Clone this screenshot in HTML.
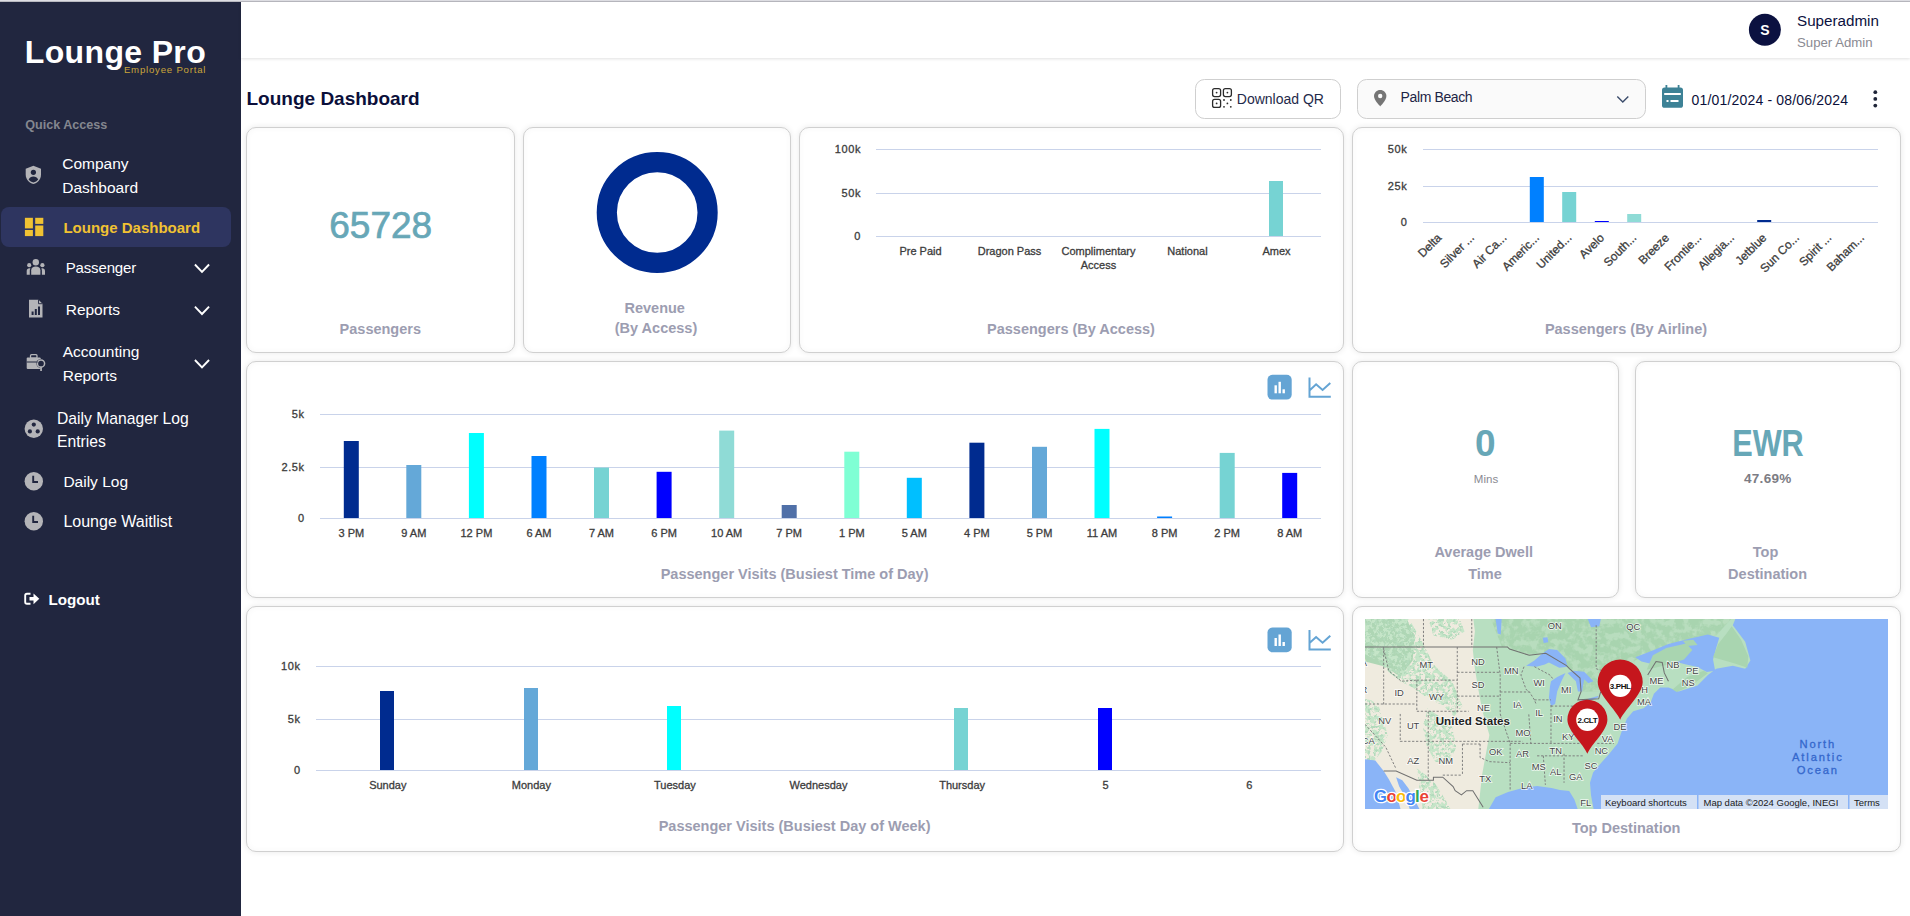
<!DOCTYPE html>
<html><head><meta charset="utf-8">
<style>
*{box-sizing:border-box;margin:0;padding:0}
html,body{width:1910px;height:916px;overflow:hidden;background:#fff;font-family:"Liberation Sans",sans-serif;position:relative}
.a{position:absolute}
.t{position:absolute;line-height:1;white-space:nowrap}
.c{text-align:center}
#topline{left:0;top:0;width:1910px;height:2px;background:linear-gradient(#dedee3 0 1px,#b9b9c0 1px 2px)}
#side{left:0;top:2px;width:241px;height:914px;background:#21263f}
#hdr{left:241px;top:2px;width:1669px;height:56px;background:#fff;box-shadow:0 1px 3px rgba(0,0,0,.12)}
.card{position:absolute;border:1px solid #d0d0d0;border-radius:10px;background:#fff;box-shadow:0 0 6px rgba(0,0,0,.09), inset 0 0 6px rgba(0,0,0,.035)}
.nav{color:#fff;font-size:16px}
.ttl{color:#9c9db1;font-weight:700;font-size:14.5px}
</style></head><body>
<div id="topline" class="a"></div>
<div id="side" class="a"></div>
<div id="hdr" class="a"></div>
<!-- SIDEBAR -->
<svg class="a" style="left:0;top:0" width="241" height="916" viewBox="0 0 241 916" font-family="Liberation Sans">
<text x="24.8" y="62.8" font-size="32" font-weight="700" fill="#fff" letter-spacing="0.35">Lounge Pro</text>
<text x="123.9" y="73.4" font-size="9.6" fill="#c9a43a" letter-spacing="0.8">Employee Portal</text>
<text x="25.2" y="129.1" font-size="12.6" font-weight="700" fill="#84868f">Quick Access</text>
<!-- company -->
<path d="M33.4 165.8 L41 168.8 V174.5 C41 179 38 182.8 33.4 184.1 C28.8 182.8 25.7 179 25.7 174.5 V168.8 Z" fill="#b4b4b8"/>
<circle cx="33.4" cy="172.3" r="2.6" fill="#21263f"/>
<path d="M28.6 179.6 C29.5 177.3 31.3 176.4 33.4 176.4 C35.5 176.4 37.3 177.3 38.2 179.6 C37 181.2 35.3 182.2 33.4 182.6 C31.5 182.2 29.8 181.2 28.6 179.6 Z" fill="#21263f"/>
<text x="62.2" y="168.9" font-size="15.5" fill="#fff">Company</text>
<text x="62.2" y="193" font-size="15.5" fill="#fff">Dashboard</text>
<!-- active -->
<rect x="1" y="207" width="230" height="40" rx="8" fill="#2e3560"/>
<g fill="#f0c233"><rect x="24.9" y="217.8" width="8" height="10.6"/><rect x="24.9" y="230" width="8" height="6.1"/><rect x="35.2" y="217.8" width="8.1" height="6.1"/><rect x="35.2" y="225.5" width="8.1" height="10.6"/></g>
<text x="63.4" y="232.7" font-size="15" font-weight="700" fill="#f1c232">Lounge Dashboard</text>
<!-- passenger -->
<g fill="#b4b4b8">
<circle cx="35.8" cy="262.2" r="3.2"/><circle cx="29.2" cy="265.2" r="2.1"/><circle cx="42.4" cy="265.2" r="2.1"/>
<path d="M31.2 274.8 V270.2 C31.2 267.6 33.2 266.4 35.8 266.4 C38.4 266.4 40.4 267.6 40.4 270.2 V274.8 Z"/>
<path d="M26.7 274.8 V271 C26.7 269.2 27.8 268.2 29.6 268.2 L30.4 268.4 C30 269 29.8 269.8 29.8 270.6 V274.8 Z"/>
<path d="M45 274.8 V271 C45 269.2 43.9 268.2 42.1 268.2 L41.3 268.4 C41.7 269 41.9 269.8 41.9 270.6 V274.8 Z"/>
</g>
<text x="65.7" y="273.2" font-size="15" fill="#fff" letter-spacing="-0.15">Passenger</text>
<!-- reports -->
<path d="M29 299.7 H38.5 L42.5 303.7 V317.6 H29 Z" fill="#b4b4b8"/>
<path d="M38.5 299.7 V303.7 H42.5" fill="none" stroke="#21263f" stroke-width="0.9"/>
<g fill="#21263f"><rect x="31.6" y="311.5" width="2" height="3.5"/><rect x="34.8" y="309" width="2" height="6"/><rect x="38" y="306.5" width="2" height="8.5"/></g>
<text x="65.7" y="315.3" font-size="15.5" fill="#fff">Reports</text>
<!-- accounting -->
<g fill="#b4b4b8">
<rect x="26.7" y="357.5" width="14" height="11.5" rx="1"/>
<rect x="30.5" y="354.7" width="6.5" height="3.5" rx="1" fill="none" stroke="#b4b4b8" stroke-width="1.3"/>
<circle cx="41" cy="363.5" r="4.6" fill="#21263f"/><circle cx="41" cy="363.5" r="3.6" fill="none" stroke="#b4b4b8" stroke-width="1.5"/>
<rect x="40.2" y="367" width="1.7" height="4"/>
</g>
<rect x="26.7" y="361.5" width="11" height="1" fill="#21263f"/>
<text x="62.7" y="357" font-size="15.5" fill="#fff">Accounting</text>
<text x="62.7" y="381.2" font-size="15.5" fill="#fff">Reports</text>
<!-- chevrons -->
<g fill="none" stroke="#fff" stroke-width="1.9" stroke-linecap="square">
<path d="M195.6 265.2 L202 271.9 L208.4 265.2"/>
<path d="M195.6 307.3 L202 314 L208.4 307.3"/>
<path d="M195.6 360.7 L202 367.4 L208.4 360.7"/>
</g>
<!-- daily manager -->
<circle cx="33.8" cy="428.8" r="9.2" fill="#b4b4b8"/>
<g fill="#21263f"><circle cx="33.8" cy="424.6" r="2.1"/><circle cx="29.9" cy="431.4" r="2.1"/><circle cx="37.7" cy="431.4" r="2.1"/></g>
<text x="57" y="423.7" font-size="15.7" fill="#fff">Daily Manager Log</text>
<text x="57" y="447" font-size="15.7" fill="#fff">Entries</text>
<!-- clocks -->
<circle cx="33.8" cy="481.2" r="9.2" fill="#b4b4b8"/>
<path d="M33.2 475.8 V482 H38" fill="none" stroke="#21263f" stroke-width="1.9"/>
<text x="63.4" y="487.1" font-size="15.5" fill="#fff">Daily Log</text>
<circle cx="33.8" cy="521.2" r="9.2" fill="#b4b4b8"/>
<path d="M33.2 515.8 V522 H38" fill="none" stroke="#21263f" stroke-width="1.9"/>
<text x="63.4" y="527.2" font-size="16" fill="#fff">Lounge Waitlist</text>
<!-- logout -->
<g transform="translate(0,-0.8)"><path d="M30.5 594.5 H27 C25.8 594.5 25.2 595.2 25.2 596.3 V602.8 C25.2 603.9 25.8 604.6 27 604.6 H30.5" fill="none" stroke="#fff" stroke-width="1.9"/>
<path d="M29.5 597.8 H33.5 V594.2 L39.3 599.6 L33.5 605 V601.4 H29.5 Z" fill="#fff"/></g>
<text x="48.4" y="604.6" font-size="15.2" font-weight="700" fill="#fff">Logout</text>
</svg>
<!-- HEADER -->
<svg class="a" style="left:241px;top:0" width="1669" height="125" viewBox="241 0 1669 125" font-family="Liberation Sans">
<circle cx="1764.9" cy="29.7" r="16" fill="#0b1140"/>
<text x="1764.9" y="35" font-size="14" font-weight="700" fill="#fff" text-anchor="middle">S</text>
<text x="1797" y="25.6" font-size="15.2" fill="#0b1140">Superadmin</text>
<text x="1797" y="46.7" font-size="13.2" fill="#8a8a92">Super Admin</text>
<text x="246.5" y="105.1" font-size="19" font-weight="700" fill="#0b0f3a">Lounge Dashboard</text>
<!-- download QR -->
<rect x="1195.5" y="79.5" width="145" height="39" rx="9" fill="#fff" stroke="#cfcfcf"/>
<g fill="none" stroke="#2b2b2b" stroke-width="1.3">
<rect x="1212.6" y="88.6" width="8" height="8" rx="2"/>
<rect x="1223.4" y="88.6" width="8" height="8" rx="2"/>
<rect x="1212.6" y="99.4" width="8" height="8" rx="2"/>
</g>
<g fill="#2b2b2b">
<circle cx="1216.6" cy="92.6" r="0.9"/><circle cx="1227.4" cy="92.6" r="0.9"/><circle cx="1216.6" cy="103.4" r="0.9"/>
<circle cx="1224" cy="100" r="0.9"/><circle cx="1230.8" cy="100" r="0.9"/><circle cx="1227.4" cy="103.4" r="0.9"/><circle cx="1224" cy="106.8" r="0.9"/><circle cx="1230.8" cy="106.8" r="0.9"/>
</g>
<text x="1236.8" y="104.3" font-size="14" fill="#1f2a4a">Download QR</text>
<!-- select -->
<rect x="1357.5" y="79.5" width="288" height="39" rx="9" fill="#fafafa" stroke="#cfcfcf"/>
<path d="M1380.2 90 C1376.8 90 1374 92.7 1374 96.1 C1374 100.5 1380.2 106.4 1380.2 106.4 C1380.2 106.4 1386.4 100.5 1386.4 96.1 C1386.4 92.7 1383.6 90 1380.2 90 Z" fill="#757575"/>
<circle cx="1380.2" cy="96" r="2.2" fill="#fafafa"/>
<text x="1400.6" y="102.2" font-size="14" fill="#1d2545" textLength="72" lengthAdjust="spacing">Palm Beach</text>
<path d="M1617.3 96.4 L1622.8 102 L1628.3 96.4" fill="none" stroke="#3b4c6b" stroke-width="1.4"/>
<!-- calendar -->
<rect x="1662" y="87.5" width="21" height="20.3" rx="2.6" fill="#3d8296"/>
<rect x="1664.2" y="93" width="16.6" height="2" fill="#fff"/>
<rect x="1665.5" y="85" width="1.8" height="4" fill="#3d8296"/><rect x="1677.7" y="85" width="1.8" height="4" fill="#3d8296"/>
<rect x="1666.5" y="100" width="2" height="2" fill="#fff"/><rect x="1670.5" y="100" width="8" height="2" fill="#fff"/>
<text x="1691.5" y="105.1" font-size="14" fill="#0b0f3a" letter-spacing="0.18">01/01/2024 - 08/06/2024</text>
<g fill="#1f2538"><circle cx="1875.3" cy="92.2" r="1.9"/><circle cx="1875.3" cy="98.9" r="1.9"/><circle cx="1875.3" cy="105.6" r="1.9"/></g>
</svg>
<!-- CARDS -->
<div class="card" style="left:246px;top:127px;width:269px;height:226px"></div>
<div class="card" style="left:523px;top:127px;width:268px;height:226px"></div>
<div class="card" style="left:799px;top:127px;width:545px;height:226px"></div>
<div class="card" style="left:1352px;top:127px;width:549px;height:226px"></div>
<div class="card" style="left:246px;top:361px;width:1098px;height:237px"></div>
<div class="card" style="left:1352px;top:361px;width:267px;height:237px"></div>
<div class="card" style="left:1635px;top:361px;width:266px;height:237px"></div>
<div class="card" style="left:246px;top:606px;width:1098px;height:246px"></div>
<div class="card" style="left:1352px;top:606px;width:549px;height:246px"></div>
<!--CARDS_BEGIN--><svg class="a" style="left:0;top:0" width="1910" height="916" viewBox="0 0 1910 916" font-family="Liberation Sans">
<text x="380.7" y="237.7" font-size="37" fill="#67a7b7" stroke="#67a7b7" stroke-width="0.7" text-anchor="middle">65728</text>
<text x="380.3" y="334.1" font-size="14.5" font-weight="700" fill="#9c9db1" text-anchor="middle">Passengers</text>
<circle cx="657.2" cy="212.5" r="50.4" fill="none" stroke="#002b8f" stroke-width="20.2"/>
<text x="654.7" y="313.4" font-size="14.5" font-weight="700" fill="#9c9db1" text-anchor="middle">Revenue</text>
<text x="656" y="333.2" font-size="14.5" font-weight="700" fill="#9c9db1" text-anchor="middle">(By Access)</text>
<rect x="876" y="149" width="445" height="1" fill="#c9d3ea"/>
<text x="861" y="153.3" font-size="11" fill="#3c3c3c" stroke="#3c3c3c" stroke-width="0.3" letter-spacing="0.6" text-anchor="end">100k</text>
<rect x="876" y="193" width="445" height="1" fill="#c9d3ea"/>
<text x="861" y="197.3" font-size="11" fill="#3c3c3c" stroke="#3c3c3c" stroke-width="0.3" letter-spacing="0.6" text-anchor="end">50k</text>
<rect x="876" y="236" width="445" height="1" fill="#c9d3ea"/>
<text x="861" y="240.3" font-size="11" fill="#3c3c3c" stroke="#3c3c3c" stroke-width="0.3" letter-spacing="0.6" text-anchor="end">0</text>
<text x="920.5" y="255.3" font-size="11" fill="#3c3c3c" stroke="#3c3c3c" stroke-width="0.3" text-anchor="middle">Pre Paid</text>
<text x="1009.5" y="255.3" font-size="11" fill="#3c3c3c" stroke="#3c3c3c" stroke-width="0.3" text-anchor="middle">Dragon Pass</text>
<text x="1098.5" y="255.3" font-size="11" fill="#3c3c3c" stroke="#3c3c3c" stroke-width="0.3" text-anchor="middle">Complimentary</text>
<text x="1187.5" y="255.3" font-size="11" fill="#3c3c3c" stroke="#3c3c3c" stroke-width="0.3" text-anchor="middle">National</text>
<text x="1276.5" y="255.3" font-size="11" fill="#3c3c3c" stroke="#3c3c3c" stroke-width="0.3" text-anchor="middle">Amex</text>
<text x="1098.5" y="269" font-size="11" fill="#3c3c3c" stroke="#3c3c3c" stroke-width="0.3" text-anchor="middle">Access</text>
<rect x="1269" y="181" width="14" height="55" fill="#76d3d3"/>
<text x="1071" y="334.1" font-size="14.5" font-weight="700" fill="#9c9db1" text-anchor="middle">Passengers (By Access)</text>
<rect x="1423" y="149" width="455" height="1" fill="#c9d3ea"/>
<text x="1407.4" y="153.3" font-size="11" fill="#3c3c3c" stroke="#3c3c3c" stroke-width="0.3" letter-spacing="0.6" text-anchor="end">50k</text>
<rect x="1423" y="186" width="455" height="1" fill="#c9d3ea"/>
<text x="1407.4" y="190.3" font-size="11" fill="#3c3c3c" stroke="#3c3c3c" stroke-width="0.3" letter-spacing="0.6" text-anchor="end">25k</text>
<rect x="1423" y="222" width="455" height="1" fill="#c9d3ea"/>
<text x="1407.4" y="226.3" font-size="11" fill="#3c3c3c" stroke="#3c3c3c" stroke-width="0.3" letter-spacing="0.6" text-anchor="end">0</text>
<text transform="translate(1442.2,238.5) rotate(-45)" font-size="11.8" fill="#3c3c3c" stroke="#3c3c3c" stroke-width="0.3" text-anchor="end">Delta</text>
<text transform="translate(1474.8,238.5) rotate(-45)" font-size="11.8" fill="#3c3c3c" stroke="#3c3c3c" stroke-width="0.3" text-anchor="end">Silver ...</text>
<text transform="translate(1507.2,238.5) rotate(-45)" font-size="11.8" fill="#3c3c3c" stroke="#3c3c3c" stroke-width="0.3" text-anchor="end">Air Ca...</text>
<text transform="translate(1539.8,238.5) rotate(-45)" font-size="11.8" fill="#3c3c3c" stroke="#3c3c3c" stroke-width="0.3" text-anchor="end">Americ...</text>
<text transform="translate(1572.2,238.5) rotate(-45)" font-size="11.8" fill="#3c3c3c" stroke="#3c3c3c" stroke-width="0.3" text-anchor="end">United...</text>
<text transform="translate(1604.8,238.5) rotate(-45)" font-size="11.8" fill="#3c3c3c" stroke="#3c3c3c" stroke-width="0.3" text-anchor="end">Avelo</text>
<text transform="translate(1637.2,238.5) rotate(-45)" font-size="11.8" fill="#3c3c3c" stroke="#3c3c3c" stroke-width="0.3" text-anchor="end">South...</text>
<text transform="translate(1669.8,238.5) rotate(-45)" font-size="11.8" fill="#3c3c3c" stroke="#3c3c3c" stroke-width="0.3" text-anchor="end">Breeze</text>
<text transform="translate(1702.2,238.5) rotate(-45)" font-size="11.8" fill="#3c3c3c" stroke="#3c3c3c" stroke-width="0.3" text-anchor="end">Frontie...</text>
<text transform="translate(1734.8,238.5) rotate(-45)" font-size="11.8" fill="#3c3c3c" stroke="#3c3c3c" stroke-width="0.3" text-anchor="end">Allegia...</text>
<text transform="translate(1767.2,238.5) rotate(-45)" font-size="11.8" fill="#3c3c3c" stroke="#3c3c3c" stroke-width="0.3" text-anchor="end">Jetblue</text>
<text transform="translate(1799.8,238.5) rotate(-45)" font-size="11.8" fill="#3c3c3c" stroke="#3c3c3c" stroke-width="0.3" text-anchor="end">Sun Co...</text>
<text transform="translate(1832.2,238.5) rotate(-45)" font-size="11.8" fill="#3c3c3c" stroke="#3c3c3c" stroke-width="0.3" text-anchor="end">Spirit ...</text>
<text transform="translate(1864.8,238.5) rotate(-45)" font-size="11.8" fill="#3c3c3c" stroke="#3c3c3c" stroke-width="0.3" text-anchor="end">Baham...</text>
<rect x="1529.8" y="177" width="14" height="45" fill="#0080ff"/>
<rect x="1562.2" y="192" width="14" height="30" fill="#76d3d3"/>
<rect x="1594.8" y="221" width="14" height="1" fill="#0000ff"/>
<rect x="1627.2" y="214" width="14" height="8" fill="#8fdbd6"/>
<rect x="1757.2" y="220" width="14" height="2" fill="#002b8f"/>
<text x="1626" y="334.1" font-size="14.5" font-weight="700" fill="#9c9db1" text-anchor="middle">Passengers (By Airline)</text>
<rect x="320" y="414" width="1001" height="1" fill="#c9d3ea"/>
<text x="304.7" y="418.3" font-size="11" fill="#3c3c3c" stroke="#3c3c3c" stroke-width="0.3" letter-spacing="0.6" text-anchor="end">5k</text>
<rect x="320" y="467" width="1001" height="1" fill="#c9d3ea"/>
<text x="304.7" y="471.3" font-size="11" fill="#3c3c3c" stroke="#3c3c3c" stroke-width="0.3" letter-spacing="0.6" text-anchor="end">2.5k</text>
<rect x="320" y="518" width="1001" height="1" fill="#c9d3ea"/>
<text x="304.7" y="522.3" font-size="11" fill="#3c3c3c" stroke="#3c3c3c" stroke-width="0.3" letter-spacing="0.6" text-anchor="end">0</text>
<rect x="343.8" y="441" width="15" height="77.0" fill="#002b8f"/>
<text x="351.3" y="537.1" font-size="11" fill="#3c3c3c" stroke="#3c3c3c" stroke-width="0.3" text-anchor="middle">3 PM</text>
<rect x="406.3" y="465" width="15" height="53.0" fill="#64a8d8"/>
<text x="413.8" y="537.1" font-size="11" fill="#3c3c3c" stroke="#3c3c3c" stroke-width="0.3" text-anchor="middle">9 AM</text>
<rect x="468.9" y="433" width="15" height="85.0" fill="#00ffff"/>
<text x="476.4" y="537.1" font-size="11" fill="#3c3c3c" stroke="#3c3c3c" stroke-width="0.3" text-anchor="middle">12 PM</text>
<rect x="531.5" y="456" width="15" height="62.0" fill="#0080ff"/>
<text x="539.0" y="537.1" font-size="11" fill="#3c3c3c" stroke="#3c3c3c" stroke-width="0.3" text-anchor="middle">6 AM</text>
<rect x="594.0" y="467.6" width="15" height="50.4" fill="#76d3d3"/>
<text x="601.5" y="537.1" font-size="11" fill="#3c3c3c" stroke="#3c3c3c" stroke-width="0.3" text-anchor="middle">7 AM</text>
<rect x="656.6" y="471.8" width="15" height="46.2" fill="#0000ff"/>
<text x="664.1" y="537.1" font-size="11" fill="#3c3c3c" stroke="#3c3c3c" stroke-width="0.3" text-anchor="middle">6 PM</text>
<rect x="719.2" y="430.6" width="15" height="87.4" fill="#8fdbd6"/>
<text x="726.7" y="537.1" font-size="11" fill="#3c3c3c" stroke="#3c3c3c" stroke-width="0.3" text-anchor="middle">10 AM</text>
<rect x="781.7" y="505" width="15" height="13.0" fill="#5070a8"/>
<text x="789.2" y="537.1" font-size="11" fill="#3c3c3c" stroke="#3c3c3c" stroke-width="0.3" text-anchor="middle">7 PM</text>
<rect x="844.3" y="451.7" width="15" height="66.3" fill="#7fffd4"/>
<text x="851.8" y="537.1" font-size="11" fill="#3c3c3c" stroke="#3c3c3c" stroke-width="0.3" text-anchor="middle">1 PM</text>
<rect x="906.8" y="477.8" width="15" height="40.2" fill="#00bfff"/>
<text x="914.3" y="537.1" font-size="11" fill="#3c3c3c" stroke="#3c3c3c" stroke-width="0.3" text-anchor="middle">5 AM</text>
<rect x="969.4" y="442.7" width="15" height="75.3" fill="#002b8f"/>
<text x="976.9" y="537.1" font-size="11" fill="#3c3c3c" stroke="#3c3c3c" stroke-width="0.3" text-anchor="middle">4 PM</text>
<rect x="1032.0" y="446.8" width="15" height="71.2" fill="#64a8d8"/>
<text x="1039.5" y="537.1" font-size="11" fill="#3c3c3c" stroke="#3c3c3c" stroke-width="0.3" text-anchor="middle">5 PM</text>
<rect x="1094.5" y="428.9" width="15" height="89.1" fill="#00ffff"/>
<text x="1102.0" y="537.1" font-size="11" fill="#3c3c3c" stroke="#3c3c3c" stroke-width="0.3" text-anchor="middle">11 AM</text>
<rect x="1157.1" y="516.5" width="15" height="1.5" fill="#0080ff"/>
<text x="1164.6" y="537.1" font-size="11" fill="#3c3c3c" stroke="#3c3c3c" stroke-width="0.3" text-anchor="middle">8 PM</text>
<rect x="1219.7" y="452.9" width="15" height="65.1" fill="#76d3d3"/>
<text x="1227.2" y="537.1" font-size="11" fill="#3c3c3c" stroke="#3c3c3c" stroke-width="0.3" text-anchor="middle">2 PM</text>
<rect x="1282.2" y="472.9" width="15" height="45.1" fill="#0000ff"/>
<text x="1289.7" y="537.1" font-size="11" fill="#3c3c3c" stroke="#3c3c3c" stroke-width="0.3" text-anchor="middle">8 AM</text>
<text x="794.6" y="579" font-size="14.5" font-weight="700" fill="#9c9db1" text-anchor="middle">Passenger Visits (Busiest Time of Day)</text>
<rect x="1267.5" y="374.8" width="24.2" height="24.8" rx="5" fill="#64a4d4"/>
<g fill="#fff"><rect x="1274.5" y="385.3" width="2.4" height="8"/><rect x="1278.5" y="381.8" width="2.4" height="11.5"/><rect x="1282.5" y="389.3" width="2.4" height="4"/></g>
<path d="M1309.5 377.40000000000003 V396.7 H1330.8 M1309.5 390.40000000000003 L1316.1 384.3 L1322.6 390.0 L1330.3 383.1" fill="none" stroke="#64a4d4" stroke-width="2"/>
<rect x="1267.5" y="627.5" width="24.2" height="24.8" rx="5" fill="#64a4d4"/>
<g fill="#fff"><rect x="1274.5" y="638.0" width="2.4" height="8"/><rect x="1278.5" y="634.5" width="2.4" height="11.5"/><rect x="1282.5" y="642.0" width="2.4" height="4"/></g>
<path d="M1309.5 630.1 V649.4 H1330.8 M1309.5 643.1 L1316.1 637.0 L1322.6 642.7 L1330.3 635.8" fill="none" stroke="#64a4d4" stroke-width="2"/>
<text x="1485.4" y="455.5" font-size="37" font-weight="700" fill="#67a7b7" text-anchor="middle">0</text>
<text x="1486" y="483.4" font-size="11.5" fill="#8a8a92" text-anchor="middle">Mins</text>
<text x="1483.7" y="557.3" font-size="14.5" font-weight="700" fill="#9c9db1" text-anchor="middle">Average Dwell</text>
<text x="1485" y="578.9" font-size="14.5" font-weight="700" fill="#9c9db1" text-anchor="middle">Time</text>
<text x="1768" y="455.5" font-size="36" font-weight="700" fill="#67a7b7" text-anchor="middle" textLength="71.5" lengthAdjust="spacingAndGlyphs">EWR</text>
<text x="1767.8" y="483.4" font-size="13.5" font-weight="700" fill="#7c7c84" text-anchor="middle" letter-spacing="0.3">47.69%</text>
<text x="1765.5" y="557.3" font-size="14.5" font-weight="700" fill="#9c9db1" text-anchor="middle">Top</text>
<text x="1767.6" y="578.9" font-size="14.5" font-weight="700" fill="#9c9db1" text-anchor="middle">Destination</text>
<rect x="316" y="666" width="1005" height="1" fill="#c9d3ea"/>
<text x="300.6" y="670.3" font-size="11" fill="#3c3c3c" stroke="#3c3c3c" stroke-width="0.3" letter-spacing="0.6" text-anchor="end">10k</text>
<rect x="316" y="719" width="1005" height="1" fill="#c9d3ea"/>
<text x="300.6" y="723.3" font-size="11" fill="#3c3c3c" stroke="#3c3c3c" stroke-width="0.3" letter-spacing="0.6" text-anchor="end">5k</text>
<rect x="316" y="770" width="1005" height="1" fill="#c9d3ea"/>
<text x="300.6" y="774.3" font-size="11" fill="#3c3c3c" stroke="#3c3c3c" stroke-width="0.3" letter-spacing="0.6" text-anchor="end">0</text>
<rect x="380" y="691" width="14" height="79" fill="#002b8f"/>
<text x="387.8" y="789.2" font-size="11" fill="#3c3c3c" stroke="#3c3c3c" stroke-width="0.3" text-anchor="middle">Sunday</text>
<rect x="524" y="688" width="14" height="82" fill="#64a8d8"/>
<text x="531.4" y="789.2" font-size="11" fill="#3c3c3c" stroke="#3c3c3c" stroke-width="0.3" text-anchor="middle">Monday</text>
<rect x="667" y="706" width="14" height="64" fill="#00ffff"/>
<text x="674.9" y="789.2" font-size="11" fill="#3c3c3c" stroke="#3c3c3c" stroke-width="0.3" text-anchor="middle">Tuesday</text>
<text x="818.5" y="789.2" font-size="11" fill="#3c3c3c" stroke="#3c3c3c" stroke-width="0.3" text-anchor="middle">Wednesday</text>
<rect x="954" y="708" width="14" height="62" fill="#76d3d3"/>
<text x="962.1" y="789.2" font-size="11" fill="#3c3c3c" stroke="#3c3c3c" stroke-width="0.3" text-anchor="middle">Thursday</text>
<rect x="1098" y="708" width="14" height="62" fill="#0000ff"/>
<text x="1105.6" y="789.2" font-size="11" fill="#3c3c3c" stroke="#3c3c3c" stroke-width="0.3" text-anchor="middle">5</text>
<text x="1249.2" y="789.2" font-size="11" fill="#3c3c3c" stroke="#3c3c3c" stroke-width="0.3" text-anchor="middle">6</text>
<text x="794.6" y="830.9" font-size="14.5" font-weight="700" fill="#9c9db1" text-anchor="middle">Passenger Visits (Busiest Day of Week)</text>
<text x="1626.2" y="833.2" font-size="14.5" font-weight="700" fill="#9c9db1" text-anchor="middle">Top Destination</text>
<defs><clipPath id="mapclip"><rect x="1365" y="619" width="523" height="190"/></clipPath><filter id="mtn" x="0" y="0" width="1" height="1" filterUnits="objectBoundingBox"><feTurbulence type="fractalNoise" baseFrequency="0.045" numOctaves="3" seed="7" result="n"/><feColorMatrix in="n" type="matrix" values="0 0 0 0 0.56  0 0 0 0 0.78  0 0 0 0 0.58  10 0 0 0 -4.6" result="c"/><feComposite in="c" in2="SourceGraphic" operator="in"/></filter><filter id="mtn2" x="0" y="0" width="1" height="1" filterUnits="objectBoundingBox"><feTurbulence type="fractalNoise" baseFrequency="0.07" numOctaves="3" seed="11" result="n"/><feColorMatrix in="n" type="matrix" values="0 0 0 0 0.45  0 0 0 0 0.70  0 0 0 0 0.50  10 0 0 0 -5.6" result="c"/><feComposite in="c" in2="SourceGraphic" operator="in"/></filter><filter id="cnd" x="0" y="0" width="1" height="1" filterUnits="objectBoundingBox"><feTurbulence type="fractalNoise" baseFrequency="0.03" numOctaves="3" seed="5" result="n"/><feColorMatrix in="n" type="matrix" values="0 0 0 0 0.55  0 0 0 0 0.77  0 0 0 0 0.58  5 0 0 0 -2.2" result="c"/><feComposite in="c" in2="SourceGraphic" operator="in"/></filter></defs>
<g clip-path="url(#mapclip)">
<rect x="1365" y="619" width="523" height="190" fill="#8ab4f7"/>
<path d="M1365.0 614.9 L1736.9 614.9 L1732.8 625.2 L1745.2 641.8 L1750.4 660.5 L1745.2 668.8 L1732.8 665.7 L1716.2 668.8 L1707.9 675.0 L1697.5 685.4 L1678.8 691.6 L1668.5 687.5 L1660.2 687.5 L1653.9 693.7 L1650.8 702.0 L1643.6 708.2 L1633.2 711.3 L1627.0 718.6 L1621.8 731.0 L1617.6 743.5 L1609.3 753.8 L1600.0 764.2 L1593.1 772.4 L1590.0 782.8 L1591.0 795.2 L1594.1 811.8 L1578.6 811.8 L1574.4 799.4 L1569.2 791.1 L1559.9 790.1 L1551.6 788.0 L1537.1 785.9 L1522.6 788.0 L1508.1 792.1 L1495.6 797.3 L1487.3 811.8 L1360.9 811.8 Z" fill="#b8dfc1"/>
<g transform="translate(1365,619) scale(0.20734)">
<path d="M-20 -20 L520 -20 L530 60 L520 150 L530 240 L545 330 L565 440 L600 560 L585 640 L565 750 L545 930 L-20 930 Z" fill="#efebdf"/>
<path d="M-20 -20 L190 -20 L240 80 L230 200 L170 280 L100 230 L-20 200 Z" fill="#aed6b4"/>
<path d="M-20 -20 L200 -20 L260 80 L330 220 L420 300 L470 420 L430 470 L380 420 L300 380 L230 330 L170 300 L120 260 L60 200 L-20 160 Z" fill="#000" filter="url(#mtn)"/>
<path d="M-20 -20 L200 -20 L260 80 L330 220 L420 300 L470 420 L430 470 L380 420 L300 380 L230 330 L170 300 L120 260 L60 200 L-20 160 Z" fill="#000" filter="url(#mtn2)"/>
<path d="M300 430 L360 470 L420 520 L440 620 L400 700 L340 690 L300 620 L280 520 Z" fill="#000" filter="url(#mtn)"/>
<path d="M300 430 L360 470 L420 520 L440 620 L400 700 L340 690 L300 620 L280 520 Z" fill="#000" filter="url(#mtn2)"/>
<path d="M-20 380 L60 400 L110 560 L80 640 L30 700 L-20 700 Z" fill="#000" filter="url(#mtn)"/>
<path d="M-20 380 L60 400 L110 560 L80 640 L30 700 L-20 700 Z" fill="#000" filter="url(#mtn2)"/>
<path d="M250 720 L330 780 L380 860 L420 930 L280 930 Z" fill="#000" filter="url(#mtn)"/>
<path d="M250 720 L330 780 L380 860 L420 930 L280 930 Z" fill="#000" filter="url(#mtn2)"/>
<path d="M300 -20 L450 -20 L480 60 L420 100 L330 80 Z" fill="#000" filter="url(#mtn)"/>
<path d="M300 -20 L450 -20 L480 60 L420 100 L330 80 Z" fill="#000" filter="url(#mtn2)"/>
</g>
<path transform="translate(1365,619) scale(0.20734)" d="M600 -20 L1300 -20 L1300 250 L1150 260 L1137 350 L1042 350 L1037 285 L972 225 L872 165 L792 175 L697 145 L687 135 L660 135 Z" fill="#a8d4af"/>
<path transform="translate(1365,619) scale(0.20734)" d="M600 -20 L1300 -20 L1300 250 L1150 260 L1137 350 L1042 350 L1037 285 L972 225 L872 165 L792 175 L697 145 L687 135 L660 135 Z" fill="#000" filter="url(#cnd)" opacity="0.6"/>
<path transform="translate(1600,619) scale(0.20743)" d="M-20 -20 L650 -20 L560 80 L400 120 L250 160 L150 210 L60 250 L-20 260 Z" fill="#a8d4af"/>
<path transform="translate(1600,619) scale(0.20743)" d="M-20 -20 L650 -20 L560 80 L400 120 L250 160 L150 210 L60 250 L-20 260 Z" fill="#000" filter="url(#cnd)" opacity="0.6"/>
<g transform="translate(1365,619) scale(0.20734)" fill="#8ab4f7">
<path d="M-20 673 L50 683 L90 733 L115 773 L150 838 L175 930 L-20 930 Z"/>
<path d="M150 763 L180 778 L210 818 L270 930 L220 930 L200 868 L165 808 Z"/>
<path d="M777 225 L817 200 L857 165 L887 145 L927 150 L967 190 L977 230 L937 235 L887 210 L867 220 L827 230 Z"/>
<path d="M897 300 L927 280 L967 260 L947 300 L927 350 L917 410 L897 420 L887 380 L892 325 Z"/>
<path d="M977 260 L1007 250 L1057 255 L1102 300 L1077 310 L1057 290 L1047 350 L1027 350 L1017 300 Z"/>
<path d="M1037 395 L1077 385 L1127 370 L1137 350 L1122 380 L1077 398 L1042 402 Z"/>
<path d="M1140 340 L1185 325 L1215 330 L1180 345 L1145 350 Z"/>
<path d="M627 -20 L660 -20 L655 75 L640 70 Z"/>
<path d="M857 90 L880 88 L884 112 L862 116 Z"/>
<path d="M1067 -20 L1142 -20 L1130 35 L1090 40 Z"/>
</g>
<g transform="translate(1600,619) scale(0.20743)" fill="#8ab4f7">
<path d="M170 185 L260 150 L330 120 L430 95 L520 75 L575 90 L560 140 L545 195 L555 250 L515 255 L470 232 L410 218 L360 205 L320 185 L240 215 L200 205 Z"/>
</g>
<g transform="translate(1600,619) scale(0.20743)" fill="#a9d5b0">
<path d="M545 185 L570 120 L610 70 L635 35 L680 100 L715 180 L710 235 L650 215 L600 200 Z"/>
<path d="M225 245 L255 175 L320 140 L415 118 L445 150 L405 195 L335 218 Z"/>
<path d="M350 340 L420 280 L500 250 L520 262 L440 320 L370 352 Z"/>
<path d="M400 105 L450 100 L470 125 L420 130 Z"/>
</g>
<g transform="translate(1365,619) scale(0.20734)" fill="none" stroke="#707070" stroke-width="5">
<path d="M-20 135 L687 135 L697 145 L792 175 L872 165 L972 225 L987 240 L1037 285 L1042 350 L1027 390 L1127 385 L1137 350"/>
<path d="M90 733 L150 733 L250 778 L330 778 L330 763 L375 763 L425 808 L435 828 L465 848 L490 828 L520 828 L570 908"/>
</g>
<g transform="translate(1600,619) scale(0.20743)" fill="none" stroke="#707070" stroke-width="5"><path d="M230 270 L270 205 L300 210 L310 260 L330 300"/></g>
<g transform="translate(1365,619) scale(0.20734)" fill="none" stroke="#7a7a7a" stroke-width="4.5" stroke-dasharray="11 8">
<path d="M282 0 V135 M515 0 V135 M90 135 V415 M445 135 V450 M635 135 L652 270 L652 458 M445 257 H651 M250 295 H445 M250 295 V445 M445 372 H651 M0 410 H250 M250 445 H500 M90 145 L115 250 L175 300 L250 295 M170 458 V593 M305 445 V778 M170 590 H760 M470 603 V753 M470 603 H555 M375 753 H470 M555 603 V668 L600 688 L700 693 M0 508 L100 618 L150 723 M767 230 L752 270 L777 340 L792 350 L817 390 L827 415 M652 352 H792 M817 230 L892 270 L907 290 M817 390 H897 M897 415 V600 M897 420 H1027 M1115 30 V240 L1147 250 M652 458 L700 600 L700 830 M700 600 H1050 M790 460 L800 600 M830 660 H1050 M860 660 L870 800 M960 650 L960 790 M1000 420 L1000 580 M1120 600 L1200 600"/>
</g>
<g transform="translate(1365,619) scale(0.20734)" font-size="45" fill="#454545" text-anchor="middle" stroke="#fff" stroke-width="8" stroke-opacity="0.75" paint-order="stroke">
<text x="915" y="47">ON</text>
<text x="545" y="220">ND</text>
<text x="295" y="237">MT</text>
<text x="705" y="267">MN</text>
<text x="545" y="335">SD</text>
<text x="840" y="324">WI</text>
<text x="970" y="357">MI</text>
<text x="165" y="372">ID</text>
<text x="345" y="392">WY</text>
<text x="735" y="427">IA</text>
<text x="572" y="445">NE</text>
<text x="840" y="467">IL</text>
<text x="930" y="495">IN</text>
<text x="95" y="507">NV</text>
<text x="232" y="532">UT</text>
<text x="762" y="562">MO</text>
<text x="980" y="582">KY</text>
<text x="1170" y="592">VA</text>
<text x="630" y="657">OK</text>
<text x="760" y="665">AR</text>
<text x="920" y="649">TN</text>
<text x="1140" y="652">NC</text>
<text x="233" y="697">AZ</text>
<text x="390" y="697">NM</text>
<text x="838" y="729">MS</text>
<text x="920" y="750">AL</text>
<text x="1090" y="722">SC</text>
<text x="1017" y="775">GA</text>
<text x="580" y="787">TX</text>
<text x="780" y="822">LA</text>
<text x="1065" y="902">FL</text>
<text x="1230" y="537">DE</text>
<text x="-5" y="227">A</text>
<text x="-5" y="357">R</text>
<text x="15" y="602">CA</text>
</g>
<text transform="translate(1365,619) scale(0.20734)" x="520" y="510" font-size="56" font-weight="700" fill="#222" text-anchor="middle" stroke="#fff" stroke-width="8" stroke-opacity="0.75" paint-order="stroke">United States</text>
<g transform="translate(1600,619) scale(0.20743)" font-size="45" fill="#454545" text-anchor="middle" stroke="#fff" stroke-width="8" stroke-opacity="0.75" paint-order="stroke">
<text x="160" y="55">QC</text>
<text x="352" y="237">NB</text>
<text x="445" y="265">PE</text>
<text x="272" y="315">ME</text>
<text x="425" y="325">NS</text>
<text x="215" y="359">H</text>
<text x="212" y="417">MA</text>
</g>
<g transform="translate(1600,619) scale(0.20743)" font-size="54" fill="#3467cc" text-anchor="middle" letter-spacing="9" stroke="#3467cc" stroke-width="1.5"><text x="1050" y="622">North</text><text x="1050" y="685">Atlantic</text><text x="1050" y="748">Ocean</text></g>
<path d="M1587.4 753.8 C1583.4 743.8 1567.4 730.7 1567.4 719.7 A20 20 0 1 1 1607.4 719.7 C1607.4 730.7 1591.4 743.8 1587.4 753.8 Z" fill="#c5161d"/>
<circle cx="1587.4" cy="719.8" r="11.2" fill="#fff"/>
<text x="1587.4" y="722.5" font-size="8" font-weight="700" fill="#111" text-anchor="middle" letter-spacing="-0.4">2.CLT</text>
<path d="M1620.2 719.8 C1616.2 709.8 1597.7 694.375 1597.7 682 A22.5 22.5 0 1 1 1642.7 682 C1642.7 694.375 1624.2 709.8 1620.2 719.8 Z" fill="#c5161d"/>
<circle cx="1620.2" cy="685.8" r="11.1" fill="#fff"/>
<text x="1620.2" y="688.5" font-size="8" font-weight="700" fill="#111" text-anchor="middle" letter-spacing="-0.4">3.PHL</text>
<g font-size="17" font-weight="700" stroke="#fff" stroke-width="2.5" paint-order="stroke"><text x="1374" y="802" fill="#4285f4">G</text><text x="1386.5" y="802" fill="#ea4335">o</text><text x="1396" y="802" fill="#fbbc05">o</text><text x="1405.5" y="802" fill="#4285f4">g</text><text x="1415" y="802" fill="#34a853">l</text><text x="1419.5" y="802" fill="#ea4335">e</text></g>
<rect x="1601" y="795" width="287" height="14" fill="#d4e1f5"/>
<rect x="1697" y="795" width="1.5" height="14" fill="#8ab4f7"/><rect x="1848" y="795" width="1.5" height="14" fill="#8ab4f7"/>
<g font-size="9.5" fill="#1a1a1a"><text x="1605" y="805.5">Keyboard shortcuts</text><text x="1703.5" y="805.5">Map data ©2024 Google, INEGI</text><text x="1854" y="805.5">Terms</text></g>
</g>
</svg><!--CARDS_END-->
</body></html>
